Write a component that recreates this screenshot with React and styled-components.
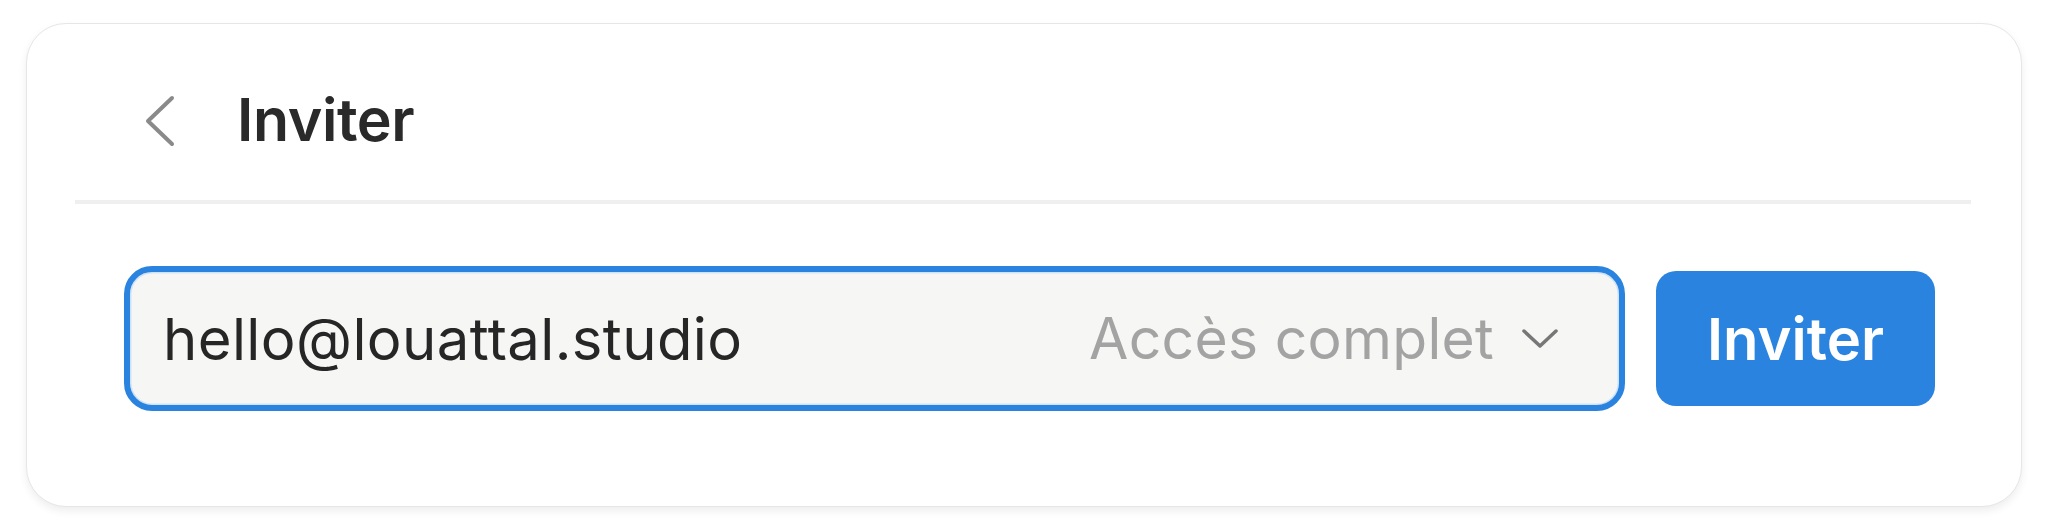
import React from "react";
import styled, { createGlobalStyle } from "styled-components";

const Global = createGlobalStyle`
  html, body { margin: 0; padding: 0; background: #ffffff; }
  body { font-family: Inter, "Noto Sans", sans-serif; -webkit-font-smoothing: antialiased; }
  * { box-sizing: border-box; }
`;

const Page = styled.div`
  padding: 23px 26px 25px 26px;
`;

const Card = styled.div`
  width: 1996px;
  height: 484px;
  background: #ffffff;
  border: 1.5px solid #e6e6e6;
  border-radius: 40px;
  box-shadow: 0 4px 8px rgba(0, 0, 0, 0.07);
  padding: 0 48px;
  display: flex;
  flex-direction: column;
`;

const Header = styled.div`
  height: 176px;
  display: flex;
  align-items: center;
  padding: 10px 0 0 70px;
  gap: 62px;
`;

const BackButton = styled.button`
  border: none;
  background: none;
  padding: 8px 0 0 0;
  display: flex;
  align-items: center;
  cursor: pointer;
`;

const Title = styled.h1`
  margin: 0;
  font-size: 59px;
  font-weight: 600;
  color: #2a2a2a;
  letter-spacing: -0.4px;
  line-height: 1;
  padding-top: 4px;
`;

const Divider = styled.div`
  height: 4px;
  background: #efefef;
  margin-right: 2px;
`;

const Row = styled.div`
  display: flex;
  align-items: center;
  gap: 31px;
  padding: 62px 38px 0 49px;
`;

const Field = styled.div`
  flex: 1;
  height: 145px;
  border: 6px solid #2a83df;
  border-radius: 28px;
  background: #f6f6f4;
  display: flex;
  align-items: center;
  padding: 0 60px 0 33px;
  box-shadow: inset 0 0 0 1.5px #cfe3f8;
`;

const Email = styled.span`
  flex: 1;
  font-size: 58px;
  color: #262626;
  letter-spacing: 0.4px;
`;

const Access = styled.button`
  border: none;
  background: none;
  padding: 0;
  display: flex;
  align-items: center;
  gap: 27px;
  font-family: inherit;
  font-size: 57px;
  color: #a3a3a3;
  letter-spacing: 0.3px;
  cursor: pointer;
`;

const Submit = styled.button`
  width: 279px;
  height: 135px;
  border: none;
  border-radius: 20px;
  background: #2a83df;
  color: #ffffff;
  font-family: inherit;
  font-size: 58px;
  font-weight: 600;
  letter-spacing: 0;
  cursor: pointer;
`;

export default function App() {
  return (
    <>
      <Global />
      <Page>
        <Card>
          <Header>
            <BackButton aria-label="Retour">
              <svg width="30" height="52" viewBox="0 0 30 52">
                <polyline
                  points="27,3 3,26 27,49"
                  fill="none"
                  stroke="#8a8a8a"
                  strokeWidth="4"
                  strokeLinecap="round"
                  strokeLinejoin="round"
                />
              </svg>
            </BackButton>
            <Title>Inviter</Title>
          </Header>
          <Divider />
          <Row>
            <Field>
              <Email>hello@louattal.studio</Email>
              <Access>
                Accès complet
                <svg width="38" height="22" viewBox="0 0 38 22">
                  <polyline
                    points="3,3 19,18 35,3"
                    fill="none"
                    stroke="#777777"
                    strokeWidth="3.5"
                    strokeLinecap="round"
                    strokeLinejoin="round"
                  />
                </svg>
              </Access>
            </Field>
            <Submit>Inviter</Submit>
          </Row>
        </Card>
      </Page>
    </>
  );
}
